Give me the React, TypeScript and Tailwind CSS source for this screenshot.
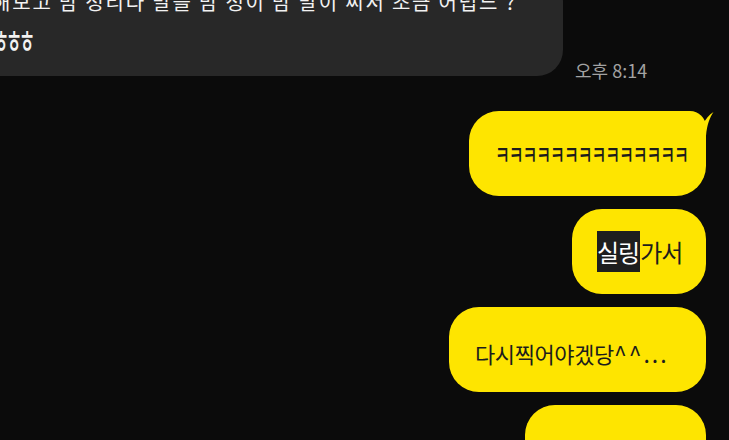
import React from "react";

const font = { fontFamily: '"Noto Sans CJK KR", "Noto Sans", sans-serif' };

export default function App() {
  return (
    <div
      className="w-[729px] h-[440px] overflow-hidden bg-[#0b0b0b] flex flex-col"
      style={font}
    >
      {/* received row */}
      <div className="flex items-end mt-[-24px]">
        <div className="ml-[-40px] w-[603px] bg-[#282828] rounded-[26px] pl-[32px] pt-[9px] pb-[20px] text-[#f2f2f2] text-[20px] leading-[34px] whitespace-nowrap overflow-hidden">
          <div className="tracking-[1.8px] mb-[3px]">해보고 맘 정리다 말을 맘 성이 맘 말이 씨서 조금 어렵느 ?</div>
          <div className="ml-[1px] h-[34px] flex items-center">
            <span className="inline-block origin-left scale-x-[0.55] text-[32px] leading-none tracking-[-5.7px] font-medium">
              ㅎㅎㅎ
            </span>
          </div>
        </div>
        <div className="ml-[12px] mb-[-4px] text-[18px] leading-[20px] text-[#a3a3a3] whitespace-nowrap">
          오후 8:14
        </div>
      </div>

      {/* sent bubbles */}
      <div className="flex flex-col items-end gap-[13px] pr-[23px] mt-[35px]">
        <div className="relative w-[237px] h-[85px] bg-[#fee500] rounded-[30px] rounded-tr-[16px] flex items-center pl-[26px]">
          <span className="inline-block origin-left scale-x-[0.62] text-[26px] leading-none text-[#1c1c1c] tracking-[-1.7px] font-medium whitespace-nowrap">
            ㅋㅋㅋㅋㅋㅋㅋㅋㅋㅋㅋㅋㅋㅋ
          </span>
          <svg
            className="absolute right-[-10px] top-[-5px]"
            width="30"
            height="35"
            viewBox="0 0 30 35"
          >
            <path
              d="M12 34 L12 14 C14 16.5 16 17.5 17.5 17 C20 13 23 8.5 27.5 6 C24 11 21 18 20 30 L20 34 Z"
              fill="#fee500"
            />
          </svg>
        </div>

        <div className="w-[134px] h-[85px] bg-[#fee500] rounded-[30px] flex items-center pl-[25px]">
          <span className="text-[24px] leading-[41px] text-[#1c1c1c] tracking-[-1px] whitespace-nowrap">
            <span className="inline-block bg-[#1e1e1e] text-white leading-[41px] pr-[1px]">실링</span>
            가서
          </span>
        </div>

        <div className="w-[257px] h-[85px] bg-[#fee500] rounded-[30px] flex items-center pl-[26px] pt-[8px]">
          <span className="text-[22px] leading-none text-[#1c1c1c] tracking-[-0.4px] whitespace-nowrap">
            다시찍어야겠당<span className="text-[23px] tracking-[2px]">^^...</span>
          </span>
        </div>

        <div className="w-[181px] h-[85px] bg-[#fee500] rounded-[30px]" />
      </div>
    </div>
  );
}
